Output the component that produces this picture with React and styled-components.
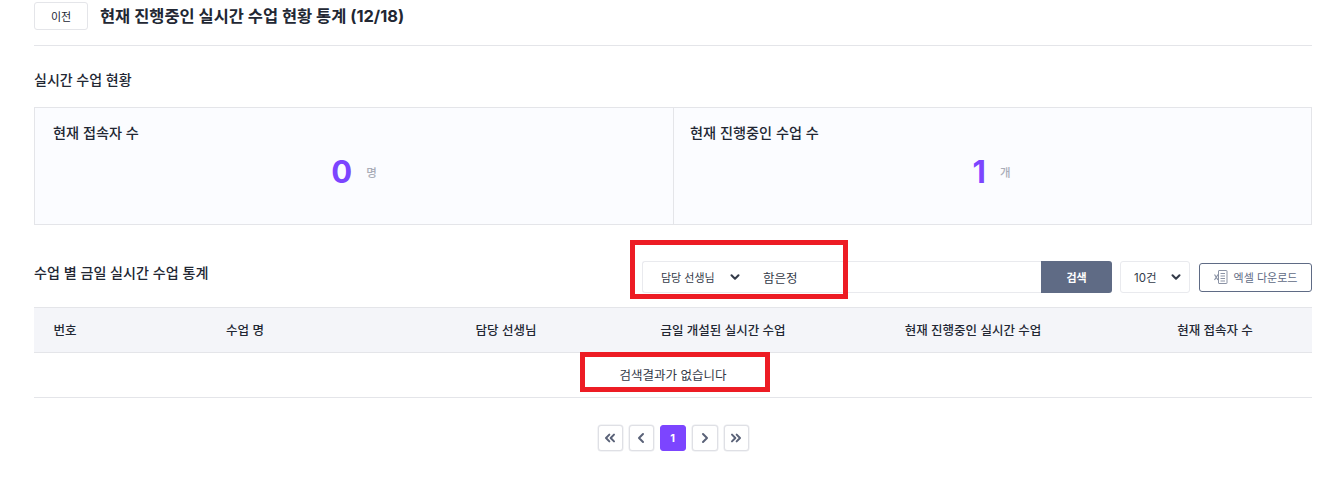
import React from 'react';
import styled, { createGlobalStyle } from 'styled-components';
import { ChevronDown, ChevronLeft, ChevronRight, ChevronsLeft, ChevronsRight } from 'lucide-react';

const GlobalStyle = createGlobalStyle`
  html, body { margin: 0; padding: 0; background: #fff; }
  * { box-sizing: border-box; }
  body {
    font-family: Inter, "Noto Sans CJK KR", sans-serif;
    color: #222733;
    overflow: hidden;
  }
`;

const Page = styled.div`
  position: relative;
  width: 1336px;
  height: 496px;
  padding: 2px 24px 0 34px;
`;

const TopBar = styled.header`
  display: flex;
  align-items: flex-start;
  gap: 12px;
  height: 44px;
  border-bottom: 1px solid #e4e5e9;
`;

const BackButton = styled.button`
  width: 54px;
  height: 28px;
  padding: 0;
  background: #fff;
  border: 1px solid #e4e5e9;
  border-radius: 3px;
  font: inherit;
  font-size: 11px;
  color: #222733;
`;

const PageTitle = styled.h1`
  margin: 0;
  font-size: 16.45px;
  line-height: 28px;
  font-weight: 700;
  color: #222733;
`;

const SectionTitle = styled.h2`
  margin: 0;
  font-size: 14px;
  line-height: 20px;
  font-weight: 500;
  color: #222733;
`;

const StatsHeading = styled(SectionTitle)`
  margin: 24px 0 17px;
`;

const ToolbarHeading = styled(SectionTitle)`
  padding-bottom: 8px;
  font-size: 14.1px;
`;

const Stats = styled.section`
  display: grid;
  grid-template-columns: 1fr 1fr;
  height: 118px;
  background: #fbfcff;
  border: 1px solid #e4e5e9;
`;

const StatCard = styled.div`
  padding: 15px 18px;
  & + & {
    padding-left: 16px;
    border-left: 1px solid #e4e5e9;
  }
`;

const StatLabel = styled.div`
  font-size: 14.2px;
  line-height: 20px;
  font-weight: 500;
`;

const StatValue = styled.div`
  display: flex;
  align-items: center;
  justify-content: center;
  gap: 14px;
  margin-top: 9px;
  height: 40px;
`;

const StatNumber = styled.span`
  font-size: 31px;
  font-weight: 700;
  line-height: 40px;
  color: #7c45ff;
`;

const StatUnit = styled.span`
  font-size: 11.5px;
  font-weight: 500;
  color: #a9adb8;
`;

const Toolbar = styled.div`
  display: flex;
  align-items: center;
  justify-content: space-between;
  margin-top: 36px;
  height: 32px;
`;

const Controls = styled.div`
  display: flex;
  align-items: center;
`;

const SearchBox = styled.div`
  display: flex;
  align-items: center;
  width: 399px;
  height: 32px;
  border: 1px solid #e9eaee;
  border-right: 0;
  border-radius: 3px 0 0 3px;
  font-size: 11px;
`;

const SearchField = styled.div`
  width: 72px;
  padding-left: 18px;
  white-space: nowrap;
  color: #333a48;
`;

const SearchChevron = styled(ChevronDown)`
  margin-left: 13px;
  color: #333a48;
`;

const SearchValue = styled.span`
  margin-left: 21px;
  font-size: 12.5px;
  color: #333a48;
`;

const SearchButton = styled.button`
  width: 71px;
  height: 32px;
  padding: 0;
  border: 0;
  border-radius: 0 3px 3px 0;
  background: #5f6b85;
  color: #fff;
  font: inherit;
  font-size: 11px;
  font-weight: 700;
`;

const PageSize = styled.div`
  display: flex;
  align-items: center;
  justify-content: space-between;
  width: 70px;
  height: 32px;
  margin-left: 8px;
  padding: 0 6px 0 13px;
  border: 1px solid #e9eaee;
  border-radius: 3px;
  font-size: 11.5px;
  color: #333a48;
`;

const ExcelButton = styled.button`
  display: flex;
  align-items: center;
  justify-content: center;
  gap: 6px;
  width: 113px;
  height: 29px;
  margin-left: 9px;
  padding: 0;
  background: #fff;
  border: 1px solid #5f6b85;
  border-radius: 3px;
  font: inherit;
  font-size: 11px;
  color: #5f6b85;
`;

const HeadRow = styled.div`
  display: grid;
  grid-template-columns: 62px 298px 224px 210px 290px 194px;
  align-items: center;
  height: 46px;
  margin-top: 14px;
  padding-bottom: 2px;
  background: #f4f5f9;
  border-top: 1px solid #e4e5e9;
  border-bottom: 1px solid #e4e5e9;
`;

const HeadCell = styled.div`
  text-align: center;
  font-size: 12.5px;
  font-weight: 500;
  white-space: nowrap;
`;

const EmptyRow = styled.div`
  height: 45px;
  padding-bottom: 2px;
  display: flex;
  align-items: center;
  justify-content: center;
  font-size: 12.5px;
  color: #333a48;
  border-bottom: 1px solid #e4e5e9;
`;

const Pager = styled.nav`
  display: flex;
  justify-content: center;
  gap: 6px;
  margin-top: 27px;
`;

const PageButton = styled.button`
  display: flex;
  align-items: center;
  justify-content: center;
  width: ${p => (p.$wide ? 26 : 25)}px;
  height: 26px;
  padding: 0;
  background: ${p => (p.$active ? '#7c45ff' : '#fff')};
  border: 1px solid ${p => (p.$active ? '#7c45ff' : '#dfe0e5')};
  border-radius: 3px;
  box-shadow: ${p => (p.$active ? 'none' : '0 0 0 0.5px #e8e9ed')};
  font: inherit;
  font-size: 11px;
  font-weight: 700;
  color: ${p => (p.$active ? '#fff' : '#5a6278')};
`;

const Annotation = styled.div`
  position: absolute;
  left: ${p => p.$x}px;
  top: ${p => p.$y}px;
  width: ${p => p.$w}px;
  height: ${p => p.$h}px;
  border: 5px solid #ed1c24;
  pointer-events: none;
`;

const ExcelIcon = () => (
  <svg width="14" height="14" viewBox="0 0 14 14" fill="none" stroke="#8b93a5" strokeWidth="1">
    <rect x="4.5" y="0.5" width="8.5" height="13" rx="0.5" />
    <path d="M6.5 3.5h4.5M6.5 6h4.5M6.5 8.5h4.5M6.5 11h4.5" />
    <path d="M0.5 4.5l3.5 5.5M4 4.5l-3.5 5.5" strokeWidth="1.2" />
  </svg>
);

const columns = ['번호', '수업 명', '담당 선생님', '금일 개설된 실시간 수업', '현재 진행중인 실시간 수업', '현재 접속자 수'];

export default function App() {
  return (
    <Page>
      <GlobalStyle />
      <TopBar>
        <BackButton>이전</BackButton>
        <PageTitle>현재 진행중인 실시간 수업 현황 통계 (12/18)</PageTitle>
      </TopBar>

      <StatsHeading>실시간 수업 현황</StatsHeading>
      <Stats>
        <StatCard>
          <StatLabel>현재 접속자 수</StatLabel>
          <StatValue>
            <StatNumber>0</StatNumber>
            <StatUnit>명</StatUnit>
          </StatValue>
        </StatCard>
        <StatCard>
          <StatLabel>현재 진행중인 수업 수</StatLabel>
          <StatValue>
            <StatNumber>1</StatNumber>
            <StatUnit>개</StatUnit>
          </StatValue>
        </StatCard>
      </Stats>

      <Toolbar>
        <ToolbarHeading>수업 별 금일 실시간 수업 통계</ToolbarHeading>
        <Controls>
          <SearchBox>
            <SearchField>담당 선생님</SearchField>
            <SearchChevron size={14} strokeWidth={3.5} />
            <SearchValue>함은정</SearchValue>
          </SearchBox>
          <SearchButton>검색</SearchButton>
          <PageSize>
            10건
            <ChevronDown size={14} strokeWidth={3.5} color="#333a48" />
          </PageSize>
          <ExcelButton>
            <ExcelIcon />
            엑셀 다운로드
          </ExcelButton>
        </Controls>
      </Toolbar>

      <HeadRow>
        {columns.map(c => <HeadCell key={c}>{c}</HeadCell>)}
      </HeadRow>
      <EmptyRow>검색결과가 없습니다</EmptyRow>

      <Pager>
        <PageButton><ChevronsLeft size={16} strokeWidth={3} /></PageButton>
        <PageButton><ChevronLeft size={16} strokeWidth={3} /></PageButton>
        <PageButton $active $wide>1</PageButton>
        <PageButton $wide><ChevronRight size={16} strokeWidth={3} /></PageButton>
        <PageButton><ChevronsRight size={16} strokeWidth={3} /></PageButton>
      </Pager>

      <Annotation $x={630} $y={240} $w={218} $h={59} />
      <Annotation $x={580} $y={352} $w={190} $h={40} />
    </Page>
  );
}
